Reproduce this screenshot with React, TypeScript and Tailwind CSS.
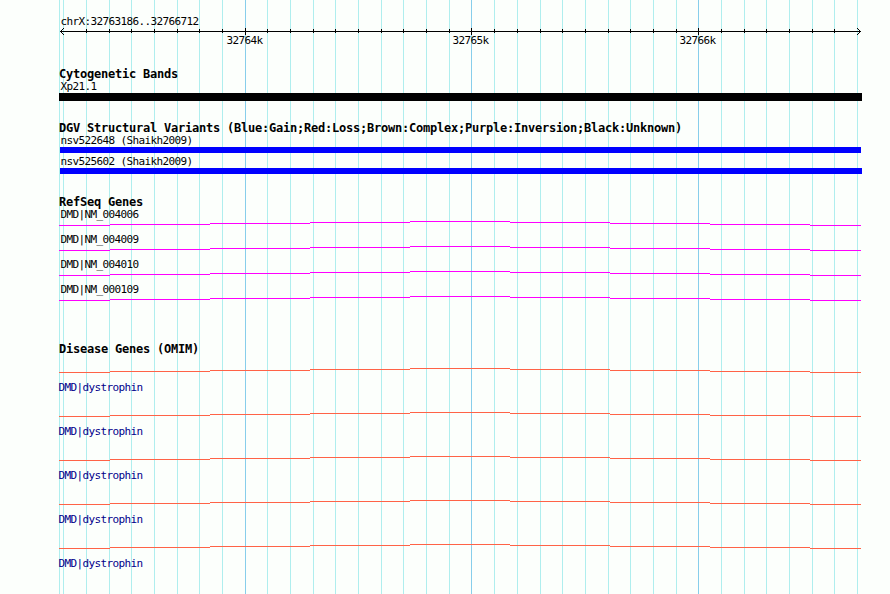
import React from "react";

const MINOR = [
  59, 63, 86, 109, 131, 154, 177, 199, 222, 267, 290, 313, 335, 358, 381, 403, 426, 449, 494, 517, 540, 562, 585,
  608, 630, 653, 676, 721, 744, 766, 789, 812, 834, 857,
];
const MAJOR = [245, 471, 698];

const small =
  "block h-3 whitespace-pre font-['DejaVu_Sans_Mono','Liberation_Mono',monospace] text-[11px] leading-3 tracking-[-0.622px]";
const heading =
  "block h-[13px] whitespace-pre pl-[59px] font-['DejaVu_Sans_Mono','Liberation_Mono',monospace] text-[12px] font-bold leading-[13px] tracking-[-0.224px] text-black";

function Grid() {
  return (
    <svg className="absolute inset-0" width="890" height="594" shapeRendering="crispEdges">
      {MINOR.map((x) => (
        <rect key={x} x={x} y={0} width={1} height={594} fill="#afeeee" />
      ))}
      {MAJOR.map((x) => (
        <rect key={x} x={x} y={0} width={1} height={594} fill="#87ceeb" />
      ))}
    </svg>
  );
}

function Ruler() {
  return (
    <svg className="block" width="890" height="7" shapeRendering="crispEdges">
      <rect x={60} y={3} width={801} height={1} />
      {MINOR.filter((x) => x > 63 && x < 857).map((x) => (
        <rect key={x} x={x} y={1} width={1} height={4} />
      ))}
      {MAJOR.map((x) => (
        <rect key={x} x={x} y={0} width={1} height={7} />
      ))}
      {[1, 2, 3].map((d) => (
        <g key={d}>
          <rect x={60 + d} y={3 - d} width={1} height={1} />
          <rect x={60 + d} y={3 + d} width={1} height={1} />
          <rect x={860 - d} y={3 - d} width={1} height={1} />
          <rect x={860 - d} y={3 + d} width={1} height={1} />
        </g>
      ))}
    </svg>
  );
}

const STEPS = [
  [59, 51, 4],
  [110, 100, 3],
  [210, 100, 2],
  [310, 100, 1],
  [410, 100, 0],
  [510, 100, 1],
  [610, 100, 2],
  [710, 100, 3],
  [810, 51, 4],
];

function Intron({ color }: { color: string }) {
  return (
    <svg className="block" width="890" height="5" shapeRendering="crispEdges">
      {STEPS.map(([x, w, y]) => (
        <rect key={x} x={x} y={y} width={w} height={1} fill={color} />
      ))}
    </svg>
  );
}

export default function App() {
  return (
    <main className="relative h-[594px] w-[890px] overflow-hidden bg-[#fcfffc] text-black">
      <Grid />
      <div className="relative flex flex-col">
        <section className="h-[68px] pt-4">
          <span className={small + " pl-[60.5px]"}>chrX:32763186..32766712</span>
          <Ruler />
          <div className="flex pl-[226.5px]">
            <span className={small + " w-[226px]"}>32764k</span>
            <span className={small + " w-[227px]"}>32765k</span>
            <span className={small}>32766k</span>
          </div>
        </section>

        <section className="h-[54px]">
          <h2 className={heading}>Cytogenetic Bands</h2>
          <span className={small + " pl-[60.5px]"}>Xp21.1</span>
          <div className="ml-[59px] h-2 w-[803px] bg-black" />
        </section>

        <section className="h-[74px]">
          <h2 className={heading}>DGV Structural Variants (Blue:Gain;Red:Loss;Brown:Complex;Purple:Inversion;Black:Unknown)</h2>
          <span className={small + " pl-[60.5px]"}>nsv522648 (Shaikh2009)</span>
          <div className="ml-[60px] h-1.5 w-[801px] bg-[#0000ff]" />
          <span className={small + " mt-[3px] pl-[60.5px]"}>nsv525602 (Shaikh2009)</span>
          <div className="ml-[60px] h-1.5 w-[802px] bg-[#0000ff]" />
        </section>

        <section className="h-[147px]">
          <h2 className={heading}>RefSeq Genes</h2>
          {["DMD|NM_004006", "DMD|NM_004009", "DMD|NM_004010", "DMD|NM_000109"].map((n) => (
            <div key={n} className="h-[25px]">
              <span className={small + " pl-[60.5px]"}>{n}</span>
              <Intron color="#ff00ff" />
            </div>
          ))}
        </section>

        <section>
          <h2 className={heading}>Disease Genes (OMIM)</h2>
          <div className="pt-3">
            {[0, 1, 2, 3, 4].map((i) => (
              <div key={i} className="h-11">
                <Intron color="#ff6347" />
                <span className={small + " mt-[9px] pl-[58.5px] text-[#00008b]"}>DMD|dystrophin</span>
              </div>
            ))}
          </div>
        </section>
      </div>
    </main>
  );
}
